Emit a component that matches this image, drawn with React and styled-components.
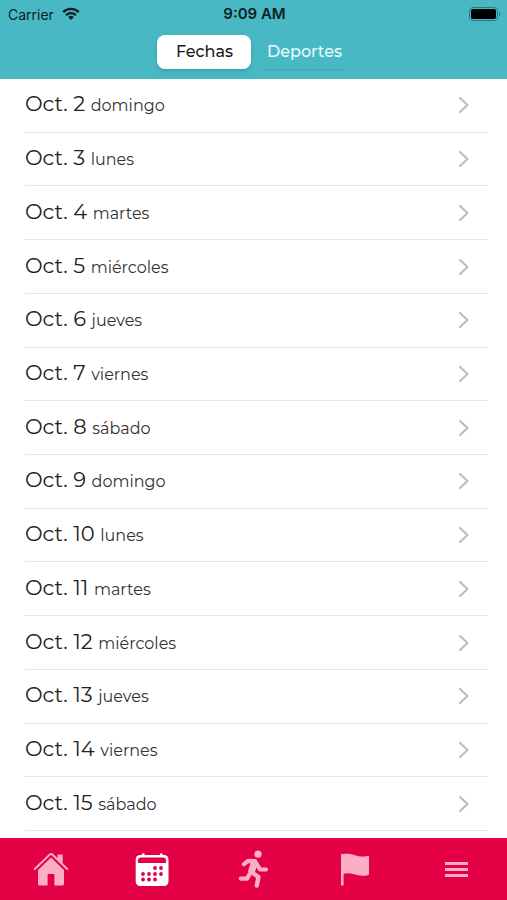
import React, { useState } from 'react'
import styled, { createGlobalStyle } from 'styled-components'

const dates = [
	{ date: 'Oct. 2', day: 'domingo' },
	{ date: 'Oct. 3', day: 'lunes' },
	{ date: 'Oct. 4', day: 'martes' },
	{ date: 'Oct. 5', day: 'miércoles' },
	{ date: 'Oct. 6', day: 'jueves' },
	{ date: 'Oct. 7', day: 'viernes' },
	{ date: 'Oct. 8', day: 'sábado' },
	{ date: 'Oct. 9', day: 'domingo' },
	{ date: 'Oct. 10', day: 'lunes' },
	{ date: 'Oct. 11', day: 'martes' },
	{ date: 'Oct. 12', day: 'miércoles' },
	{ date: 'Oct. 13', day: 'jueves' },
	{ date: 'Oct. 14', day: 'viernes' },
	{ date: 'Oct. 15', day: 'sábado' },
]

const tabs = ['Fechas', 'Deportes']

const WifiIcon = () => (
	<svg width="18" height="14" viewBox="0 0 18 14" aria-hidden="true">
		<g fill="none" stroke="#0c2023" strokeWidth="2.3">
			<path d="M1.2 5.1a11 11 0 0 1 15.6 0" />
			<path d="M4.1 8.2a7 7 0 0 1 9.8 0" />
		</g>
		<path d="M9 13 6.1 10.1a4.1 4.1 0 0 1 5.8 0z" fill="#0c2023" />
	</svg>
)

const BatteryIcon = () => (
	<svg width="32" height="14" viewBox="0 0 32 14" aria-hidden="true">
		<rect x="0.5" y="0.5" width="28" height="13" rx="3.5" fill="none" stroke="#2b7880" />
		<rect x="2" y="2" width="25" height="10" rx="2" fill="#000" />
		<path d="M30 4.7c1.6.6 1.6 4 0 4.6z" fill="#2b7880" />
	</svg>
)

const ChevronIcon = () => (
	<svg width="12" height="18" viewBox="0 0 12 18" aria-hidden="true">
		<path
			d="M2 2l7.5 7L2 16"
			fill="none"
			stroke="#bdbdbd"
			strokeWidth="2.2"
			strokeLinecap="round"
			strokeLinejoin="round"
		/>
	</svg>
)

const HomeIcon = () => (
	<svg width="36" height="36" viewBox="0 0 36 36" aria-hidden="true">
		<path
			d="M1.8 18 16.7 3.6a1.9 1.9 0 0 1 2.6 0L34.2 18"
			fill="none"
			stroke="currentColor"
			strokeWidth="2"
			strokeLinecap="round"
		/>
		<path d="M24.5 3.5h5.2v10.2l-5.200-5z" fill="currentColor" />
		<path
			d="M18 6.4 31 19v14a1.4 1.4 0 0 1-1.4 1.4h-8.2V24a1 1 0 0 0-1-1h-4.800a1 1 0 0 0-1 1v10.4H6.4A1.4 1.4 0 0 1 5 33V19z"
			fill="currentColor"
		/>
	</svg>
)

const dots = [
	[20, 16], [26, 16],
	[8, 22], [14, 22], [20, 22], [26, 22],
	[8, 27.5], [14, 27.5], [20, 27.5],
]

const CalendarIcon = () => (
	<svg width="34" height="34" viewBox="0 0 34 34" aria-hidden="true">
		<rect x="0.700" y="3" width="32.800" height="31" rx="4.5" fill="currentColor" />
		<rect x="7" y="1.2" width="2.6" height="5" rx="1.2" fill="currentColor" />
		<rect x="25" y="1.2" width="2.6" height="5" rx="1.2" fill="currentColor" />
		<path d="M3 11V8.600a3 3 0 0 1 3-3h22a3 3 0 0 1 3 3V11z" fill="#e40045" />
		{dots.map(([x, y]) => (
			<circle key={`${x}-${y}`} cx={x} cy={y} r="1.9" fill="#e40045" />
		))}
	</svg>
)

const RunnerIcon = () => (
	<svg width="34" height="38" viewBox="0 0 34 38" aria-hidden="true">
		<circle cx="22" cy="4.2" r="3.6" fill="currentColor" />
		<g
			fill="none"
			stroke="currentColor"
			strokeLinecap="round"
			strokeLinejoin="round"
		>
			<path d="m8 14.200 4-3.400 7 .4" strokeWidth="4.2" />
			<path d="m20 12.8 4 6.500 6 .2" strokeWidth="4.2" />
			<path d="m18 13.500-2.300 7.500" strokeWidth="7" />
			<path d="m16 22.500 6.500 4.500-1.700 8.500" strokeWidth="4.400" />
			<path d="M4.800 28.600h6.200l2.500-4.200" strokeWidth="4.200" />
		</g>
	</svg>
)

const FlagIcon = () => (
	<svg width="30" height="34" viewBox="0 0 30 34" aria-hidden="true">
		<path d="M2.3 3v29.5" fill="none" stroke="currentColor" strokeWidth="2.6" strokeLinecap="round" />
		<path
			d="M1 3.200C4 1.400 9 1.200 13.5 2.800c5 1.9 9.5 2.5 14.6.9.5-.1.9.1.9.6v17.6c0 .5-.2.8-.7 1-4.6 1.4-9.3 1-14.4-.6C9.700 21 6 21 2 22.300z"
			fill="currentColor"
		/>
	</svg>
)

const MenuIcon = () => (
	<svg width="24" height="18" viewBox="0 0 24 18" aria-hidden="true">
		<path
			d="M1 3.500h23M1 9.500h23M1 15.500h23"
			fill="none"
			stroke="currentColor"
			strokeWidth="3"
		/>
	</svg>
)

const navItems = [
	{ name: 'Inicio', icon: <HomeIcon /> },
	{ name: 'Calendario', icon: <CalendarIcon /> },
	{ name: 'Deportes', icon: <RunnerIcon /> },
	{ name: 'Países', icon: <FlagIcon /> },
	{ name: 'Menú', icon: <MenuIcon /> },
]

const App = () => {
	const [tab, setTab] = useState('Fechas')
	const [page, setPage] = useState('Calendario')

	return (
		<Screen>
			<GlobalStyle />
			<Header>
				<StatusBar>
					<Carrier>
						Carrier <WifiIcon />
					</Carrier>
					<Time>9:09 AM</Time>
					<Battery>
						<BatteryIcon />
					</Battery>
				</StatusBar>
				<Tabs>
					{tabs.map((item) => (
						<Tab
							key={item}
							type="button"
							aria-pressed={tab === item}
							$active={tab === item}
							onClick={() => setTab(item)}
						>
							{item}
						</Tab>
					))}
				</Tabs>
			</Header>
			<List>
				{dates.map((item) => (
					<Item key={item.date}>
						<ItemButton type="button">
							<Label>
								{item.date} <Day>{item.day}</Day>
							</Label>
							<ChevronIcon />
						</ItemButton>
					</Item>
				))}
			</List>
			<Nav>
				{navItems.map((item) => (
					<NavButton
						key={item.name}
						type="button"
						aria-label={item.name}
						$active={page === item.name}
						onClick={() => setPage(item.name)}
					>
						{item.icon}
					</NavButton>
				))}
			</Nav>
		</Screen>
	)
}

const GlobalStyle = createGlobalStyle`
	* {
		box-sizing: border-box;
	}
	body {
		margin: 0;
		background-color: #fff;
		font-family: Montserrat, Inter, sans-serif;
		color: #222;
	}
	button {
		border: none;
		padding: 0;
		background: none;
		font-family: inherit;
		color: inherit;
		cursor: pointer;
	}
`
const Screen = styled.div`
	display: flex;
	flex-direction: column;
	min-height: 100vh;
`
const Header = styled.header`
	display: flex;
	flex-direction: column;
	gap: 7px;
	padding-bottom: 10px;
	background-color: #48b9c4;
`
const StatusBar = styled.div`
	display: grid;
	grid-template-columns: 1fr auto 1fr;
	align-items: center;
	height: 28px;
	padding: 0 6px 0 8px;
	font-family: Inter, sans-serif;
	font-size: 14px;
	color: #0c2023;
`
const Carrier = styled.div`
	display: flex;
	align-items: center;
	gap: 8px;
`
const Time = styled.div`
	font-size: 15px;
	line-height: 16px;
	font-weight: 600;
`
const Battery = styled.div`
	display: flex;
	justify-content: flex-end;
`
const Tabs = styled.div`
	display: grid;
	grid-template-columns: 94px 94px;
	justify-content: center;
	gap: 6px;
`
const Tab = styled.button`
	height: 34px;
	padding: 0 0 2px 2px;
	border-radius: 8px;
	font-size: 16px;
	font-weight: 500;
	color: ${(props) => (props.$active ? '#1c1c1c' : '#e6fbfc')};
	background-color: ${(props) => (props.$active ? '#fff' : 'transparent')};
	box-shadow: ${(props) =>
		props.$active ? '0 2px 5px rgba(0, 70, 80, 0.2)' : '0 4px 2px -2px rgba(0, 70, 80, 0.08)'};
`
const List = styled.ul`
	flex: 1;
	display: flex;
	flex-direction: column;
	margin: 0;
	padding: 0 19px 7px 25px;
	list-style: none;
`
const Item = styled.li`
	flex: 1;
	display: flex;
	min-height: 48px;
	border-bottom: 1px solid #e6e6e6;
`
const ItemButton = styled.button`
	flex: 1;
	display: flex;
	align-items: center;
	justify-content: space-between;
	padding-right: 18px;
	text-align: left;
`
const Label = styled.span`
	font-size: 21px;
	line-height: 28px;
`
const Day = styled.span`
	font-size: 16px;
	color: #333;
`
const Nav = styled.nav`
	display: grid;
	grid-template-columns: repeat(5, 1fr);
	height: 62px;
	background-color: #e40045;
`
const NavButton = styled.button`
	display: flex;
	align-items: center;
	justify-content: center;
	color: ${(props) => (props.$active ? '#fff' : '#fbaec6')};
`

export default App
